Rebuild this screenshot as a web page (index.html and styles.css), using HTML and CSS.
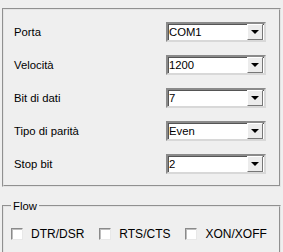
FILE: index.html
```html
<!DOCTYPE html>
<html lang="it">
<head>
  <meta charset="UTF-8">
  <title>Impostazioni porta</title>
  <link rel="stylesheet" href="styles.css">
</head>
<body>

  <!-- Serial settings -->
  <div class="panel">
    <div class="row">
      <span class="label">Porta</span>
      <div class="combo"><span class="value">COM1</span><span class="drop"></span></div>
    </div>
    <div class="row">
      <span class="label">Velocità</span>
      <div class="combo"><span class="value">1200</span><span class="drop"></span></div>
    </div>
    <div class="row">
      <span class="label">Bit di dati</span>
      <div class="combo"><span class="value">7</span><span class="drop"></span></div>
    </div>
    <div class="row">
      <span class="label">Tipo di parità</span>
      <div class="combo"><span class="value">Even</span><span class="drop"></span></div>
    </div>
    <div class="row">
      <span class="label">Stop bit</span>
      <div class="combo"><span class="value">2</span><span class="drop"></span></div>
    </div>
  </div>

  <!-- Flow control -->
  <fieldset class="flow">
    <legend>Flow</legend>
    <div class="checks">
      <label class="check"><span class="box"></span>DTR/DSR</label>
      <label class="check"><span class="box"></span>RTS/CTS</label>
      <label class="check"><span class="box"></span>XON/XOFF</label>
    </div>
  </fieldset>

</body>
</html>
```

FILE: styles.css
```css
body {
  margin: 0;
  padding: 8px 2px 0 2px;
  background: #efefef;
  font-family: 'Liberation Sans', Arial, sans-serif;
  font-size: 11.3px;
  color: #000;
  height: 252px;
  box-sizing: border-box;
  overflow: hidden;
}

.panel {
  width: 279px;
  box-sizing: border-box;
  border: 2px groove #e4e4e4;
  padding: 12px 13px 11px 10px;
  display: flex;
  flex-direction: column;
  gap: 13px;
}

.row {
  display: flex;
  align-items: center;
  height: 20px;
}

.label {
  flex: 1;
}

.combo {
  width: 100px;
  height: 20px;
  box-sizing: border-box;
  background: #fff;
  border: 2px solid;
  border-color: #8a8a8a #d8d8d8 #d8d8d8 #8a8a8a;
  box-shadow: inset 1px 1px 0 #555;
  display: flex;
  align-items: center;
  padding: 0 1px 0 1px;
}

.combo .value {
  flex: 1;
}

.drop {
  width: 16px;
  height: 16px;
  box-sizing: border-box;
  background: #ececec;
  border: 1px solid;
  border-color: #fff #777 #777 #fff;
  display: flex;
  align-items: center;
  justify-content: center;
}

.drop::after {
  content: '';
  border-left: 4px solid transparent;
  border-right: 4px solid transparent;
  border-top: 4px solid #000;
}

.flow {
  width: 279px;
  box-sizing: border-box;
  margin: 13px 0 0 0;
  padding: 15px 0 20px 7px;
  border: 2px groove #e4e4e4;
}

.flow legend {
  padding: 0 2px;
  font-size: 11.3px;
}

.checks {
  display: flex;
  gap: 15px;
}

.check {
  display: flex;
  align-items: center;
  gap: 8px;
  font-size: 12px;
}

.box {
  width: 12px;
  height: 12px;
  box-sizing: border-box;
  background: #fff;
  border: 1px solid;
  border-color: #8a8a8a #e8e8e8 #e8e8e8 #8a8a8a;
  box-shadow: inset 1px 1px 0 #bdbdbd;
}
```
